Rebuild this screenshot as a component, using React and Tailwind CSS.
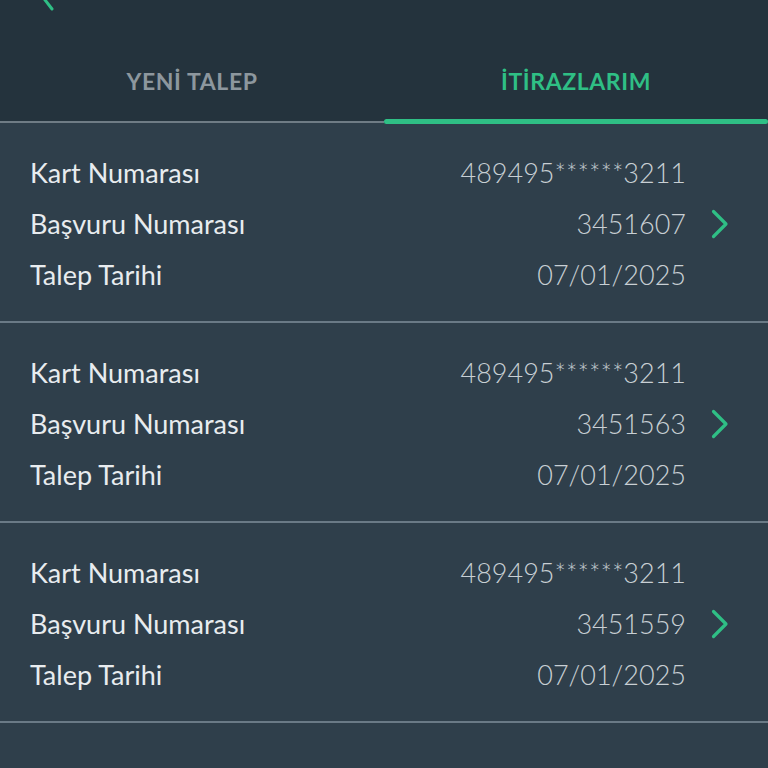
import { useState } from "react";

const items = [
  { card: "489495******3211", no: "3451607", date: "07/01/2025" },
  { card: "489495******3211", no: "3451563", date: "07/01/2025" },
  { card: "489495******3211", no: "3451559", date: "07/01/2025" },
];

function Chevron({ className }) {
  return (
    <svg viewBox="0 0 18 30" className={className} fill="none">
      <path d="M2.5 2.5 L15 15 L2.5 27.5" stroke="currentColor" strokeWidth="3.2" strokeLinecap="round" strokeLinejoin="round" />
    </svg>
  );
}

export default function App() {
  const [tab, setTab] = useState(1);

  return (
    <div className="min-h-screen bg-[#2f3f4b] font-['Lato','Noto_Sans',sans-serif] overflow-hidden">
      {/* Header */}
      <div className="relative bg-[#24333d] h-[123px] flex flex-col">
        <svg viewBox="0 0 30 30" className="absolute left-[36px] -top-[18px] w-[30px] h-[30px] text-[#2fbf85]" fill="none">
          <path d="M17 2 L6 14 L16 27" stroke="currentColor" strokeWidth="3" strokeLinecap="round" strokeLinejoin="round" />
        </svg>
        <div className="flex-1" />
        <div className="flex h-[81px]">
          {["YENİ TALEP", "İTİRAZLARIM"].map((t, i) => (
            <button
              key={t}
              onClick={() => setTab(i)}
              className={
                "flex-1 relative flex items-center justify-center pb-[3px] text-[23px] font-bold tracking-[0.6px] " +
                (tab === i ? "text-[#2fbf85]" : "text-[#8d979e]")
              }
            >
              {t}
              <span
                className={
                  "absolute left-0 right-0 " +
                  (tab === i ? "bottom-[-1px] h-[5px] bg-[#2fbf85] rounded-full" : "bottom-0 h-[2px] bg-[#6f7c85]")
                }
              />
            </button>
          ))}
        </div>
      </div>

      {/* List */}
      <div className="flex flex-col">
        {items.map((it) => (
          <div key={it.no} className="flex items-center border-b-2 border-[#6a7a86] h-[200px] pt-[3px] pl-[30px] pr-[39px]">
            <div className="flex-1 flex flex-col text-[27px] leading-[51px]">
              <div className="flex justify-between">
                <span className="text-[#e8ecef]">Kart Numarası</span>
                <span className="text-[#c8cfd4] font-light">{it.card}</span>
              </div>
              <div className="flex justify-between">
                <span className="text-[#e8ecef]">Başvuru Numarası</span>
                <span className="text-[#c8cfd4] font-light">{it.no}</span>
              </div>
              <div className="flex justify-between">
                <span className="text-[#e8ecef]">Talep Tarihi</span>
                <span className="text-[#c8cfd4] font-light">{it.date}</span>
              </div>
            </div>
            <Chevron className="ml-[25px] w-[18px] h-[30px] text-[#2fbf85]" />
          </div>
        ))}
      </div>
    </div>
  );
}
